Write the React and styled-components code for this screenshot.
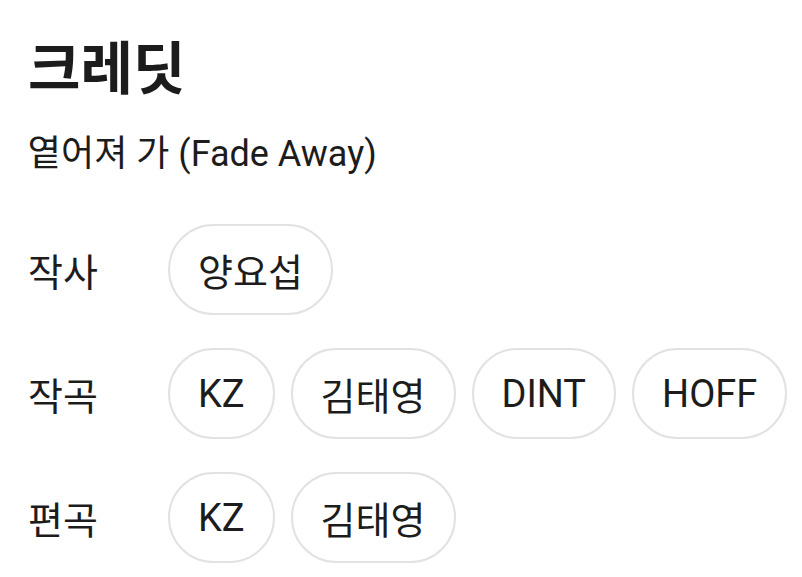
import styled, { createGlobalStyle } from 'styled-components';

const GlobalStyle = createGlobalStyle`
  html, body {
    margin: 0;
    padding: 0;
    background: #fff;
  }
  body {
    font-family: Roboto, "Noto Sans CJK KR", sans-serif;
    color: #1c1c1c;
  }
`

const Page = styled.div`
  padding: 24px 28px 0;
`

const Title = styled.h1`
  margin: 0;
  font-size: 57px;
  font-weight: 700;
  line-height: 80px;
  font-family: "Noto Sans CJK KR", sans-serif;
`

const Song = styled.div`
  margin-top: 25px;
  font-size: 36px;
  line-height: 50px;
`

const Rows = styled.div`
  margin-top: 45px;
  display: flex;
  flex-direction: column;
  gap: 33px;
`

const Row = styled.div`
  display: flex;
  align-items: center;
`

const Label = styled.div`
  width: 140px;
  flex-shrink: 0;
  font-size: 38px;
`

const Chips = styled.div`
  display: flex;
  gap: 16px;
`

const Chip = styled.div`
  box-sizing: border-box;
  height: 91px;
  padding: 0 28px;
  display: flex;
  align-items: center;
  border: 2px solid #e2e2e2;
  border-radius: 46px;
  font-size: 38px;
  white-space: nowrap;
`

const credits = [
  { role: '작사', names: ['양요섭'] },
  { role: '작곡', names: ['KZ', '김태영', 'DINT', 'HOFF'] },
  { role: '편곡', names: ['KZ', '김태영'] },
]

export default function App() {
  return (
    <>
      <GlobalStyle />
      <Page>
        <Title>크레딧</Title>
        <Song>옅어져 가 (Fade Away)</Song>
        <Rows>
          {credits.map(c => (
            <Row key={c.role}>
              <Label>{c.role}</Label>
              <Chips>
                {c.names.map(n => <Chip key={n}>{n}</Chip>)}
              </Chips>
            </Row>
          ))}
        </Rows>
      </Page>
    </>
  )
}
